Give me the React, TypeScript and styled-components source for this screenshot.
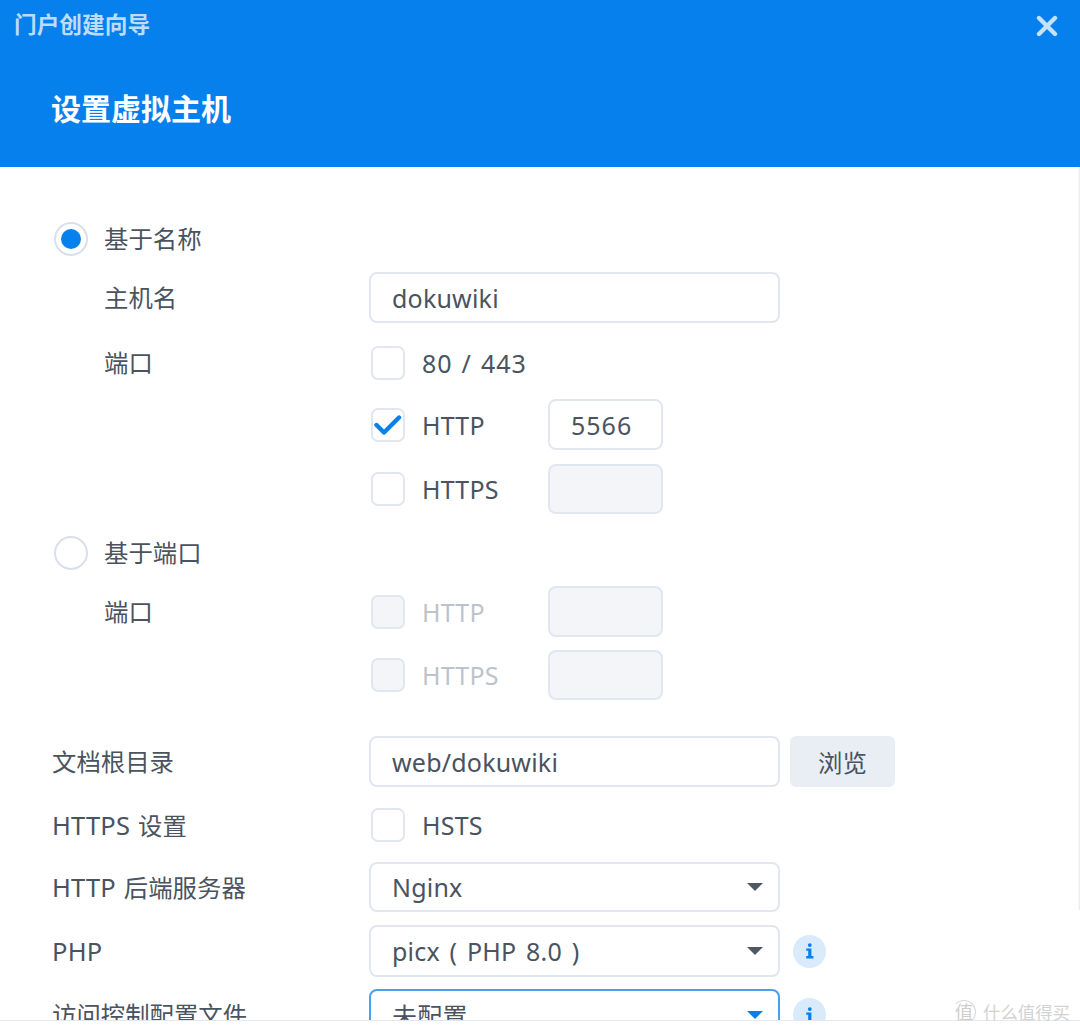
import styled, { createGlobalStyle } from "styled-components"

const FONT = `"Noto Sans", "Noto Sans CJK SC", sans-serif`

const GlobalStyle = createGlobalStyle`
  html, body {
    margin: 0;
    padding: 0;
    background: #fff;
  }
  body {
    font-family: ${FONT};
    color: #4a5360;
  }
`

const Page = styled.div`
  position: relative;
  width: 1080px;
  height: 1034px;
  overflow: hidden;
  background: #fff;
`

const Header = styled.header`
  height: 167px;
  background: #0580ed;
  display: flex;
  flex-direction: column;
  box-sizing: border-box;
`

const TitleBar = styled.div`
  height: 52px;
  padding: 0 22px 0 14px;
  display: flex;
  align-items: center;
  justify-content: space-between;
`

const WindowTitle = styled.div`
  font-size: 22.7px;
  font-weight: 700;
  line-height: 28px;
  padding-bottom: 2px;
  color: #bcdcfa;
`

const Heading = styled.h1`
  margin: 33px 0 0 51px;
  font-size: 30px;
  line-height: 48px;
  font-weight: 700;
  color: #fff;
`

const Body = styled.main`
  height: 854px;
  overflow: hidden;
  box-sizing: border-box;
  padding: 55px 0 0 52px;
  display: flex;
  flex-direction: column;
  border-bottom: 1px solid #e3e8ee;
`

const Row = styled.div<{ $h: number; $mt?: number }>`
  display: grid;
  grid-template-columns: 317px 1fr;
  align-items: center;
  flex: none;
  height: ${(p) => p.$h}px;
  margin-top: ${(p) => p.$mt ?? 0}px;
`

const RadioRow = styled(Row)`
  display: flex;
  gap: 16px;
  padding-left: 2px;
`

const Label = styled.div<{ $indent?: boolean }>`
  font-size: 24.4px;
  line-height: 32px;
  padding-left: ${(p) => (p.$indent ? 52 : 0)}px;
  white-space: nowrap;
`

// latin part of a label runs a bit wider than the chinese next to it
const Latin = styled.span`
  font-size: 25.5px;
  letter-spacing: 0.2px;
  word-spacing: 1px;
`

const RadioMark = styled.span<{ $on?: boolean }>`
  width: 34px;
  height: 34px;
  box-sizing: border-box;
  border-radius: 50%;
  border: 2px solid #d9e0ea;
  background: #fff;
  display: flex;
  align-items: center;
  justify-content: center;
  &::after {
    content: "";
    display: ${(p) => (p.$on ? "block" : "none")};
    width: 20px;
    height: 20px;
    border-radius: 50%;
    background: #0580ed;
  }
`

const Controls = styled.div`
  display: flex;
  align-items: center;
`

const Field = styled.div<{ $w?: number; $h?: number; $off?: boolean; $focus?: boolean; $num?: boolean }>`
  width: ${(p) => p.$w ?? 411}px;
  height: ${(p) => p.$h ?? 51}px;
  box-sizing: border-box;
  flex: none;
  display: flex;
  align-items: center;
  justify-content: space-between;
  padding: 0 21px;
  border: 2px solid ${(p) => (p.$focus ? "#4a9ff0" : "#e0e7f1")};
  border-radius: 8px;
  background: ${(p) => (p.$off ? "#f3f5f9" : "#fff")};
  font-size: 25px;
  letter-spacing: ${(p) => (p.$num ? 1 : 0.2)}px;
  word-spacing: 3px;
  white-space: nowrap;
`

const Caret = styled.span<{ $focus?: boolean }>`
  width: 0;
  height: 0;
  margin-right: -6px;
  border-left: 8px solid transparent;
  border-right: 8px solid transparent;
  border-top: 8px solid ${(p) => (p.$focus ? "#0580ed" : "#4f5863")};
`

const Browse = styled.div`
  width: 105px;
  height: 51px;
  margin-left: 10px;
  border-radius: 6px;
  background: #e9eef4;
  display: flex;
  align-items: center;
  justify-content: center;
  font-size: 24.4px;
`

const CheckWrap = styled.div`
  display: flex;
  align-items: center;
  margin-left: 2px;
`

const Box = styled.span<{ $off?: boolean }>`
  width: 34px;
  height: 34px;
  box-sizing: border-box;
  flex: none;
  border: 2px solid #e0e7f1;
  border-radius: 7px;
  background: ${(p) => (p.$off ? "#f3f5f9" : "#fff")};
  display: flex;
  align-items: center;
  justify-content: center;
`

const CheckLabel = styled.span<{ $off?: boolean; $w?: number; $num?: boolean }>`
  margin-left: 17px;
  width: ${(p) => (p.$w ? `${p.$w}px` : "auto")};
  font-size: 25px;
  letter-spacing: ${(p) => (p.$num ? 1 : 0.2)}px;
  word-spacing: ${(p) => (p.$num ? 1.5 : 0)}px;
  color: ${(p) => (p.$off ? "#bcc3cc" : "#4a5360")};
  white-space: nowrap;
`

const InfoBadge = styled.span`
  width: 33px;
  height: 33px;
  margin-left: 13px;
  border-radius: 50%;
  background: #d9eafb;
  display: flex;
  align-items: center;
  justify-content: center;
  flex: none;
`

const ScrollEdge = styled.div`
  position: absolute;
  right: 0;
  top: 167px;
  width: 2px;
  height: 743px;
  background: linear-gradient(to right, transparent, #e6e6e6);
`

const Watermark = styled.div`
  position: absolute;
  left: 952px;
  top: 1000px;
  display: flex;
  align-items: center;
  gap: 7px;
  color: #d2d2d2;
  font-size: 17.4px;
  line-height: 24px;
  white-space: nowrap;
`

const Stamp = styled.span`
  width: 24px;
  height: 24px;
  box-sizing: border-box;
  border: 1px solid #d6d6d6;
  border-left-color: transparent;
  border-bottom-color: transparent;
  border-radius: 50%;
  display: flex;
  align-items: center;
  justify-content: center;
  font-size: 18px;
  color: #cdcdcd;
`

const CloseIcon = () => (
  <svg width="22" height="22" viewBox="0 0 22 22">
    <path d="M3 3 L19 19 M19 3 L3 19" stroke="#c6e2fb" strokeWidth="4.4" strokeLinecap="round" />
  </svg>
)

const CheckIcon = () => (
  <svg width="28" height="22" viewBox="0 0 28 22">
    <path d="M2.5 11 L10 18.5 L25 3.5" fill="none" stroke="#0580ed" strokeWidth="4.4" strokeLinecap="round" strokeLinejoin="round" />
  </svg>
)

const InfoIcon = () => (
  <svg width="9.6" height="16" viewBox="0 0 12 20">
    <circle cx="6" cy="2.6" r="2.4" fill="#0580ed" />
    <path d="M1.5 7 H8 V16.4 H10.5 V19.5 H1.5 V16.4 H4 V9.6 H1.5 Z" fill="#0580ed" />
  </svg>
)

type CheckProps = { label: string; checked?: boolean; off?: boolean; w?: number; num?: boolean }

const Check = ({ label, checked, off, w, num }: CheckProps) => (
  <CheckWrap>
    <Box $off={off}>{checked && <CheckIcon />}</Box>
    <CheckLabel $off={off} $w={w} $num={num}>{label}</CheckLabel>
  </CheckWrap>
)

const App = () => (
  <Page>
    <GlobalStyle />
    <Header>
      <TitleBar>
        <WindowTitle>门户创建向导</WindowTitle>
        <CloseIcon />
      </TitleBar>
      <Heading>设置虚拟主机</Heading>
    </Header>
    <Body>
      <RadioRow $h={34}>
        <RadioMark $on />
        <Label>基于名称</Label>
      </RadioRow>
      <Row $h={51} $mt={16}>
        <Label $indent>主机名</Label>
        <Field>dokuwiki</Field>
      </Row>
      <Row $h={34} $mt={23}>
        <Label $indent>端口</Label>
        <Check label="80 / 443" num />
      </Row>
      <Row $h={51} $mt={19}>
        <span />
        <Controls>
          <Check label="HTTP" checked w={126} />
          <Field $w={115} $num>5566</Field>
        </Controls>
      </Row>
      <Row $h={50} $mt={14}>
        <span />
        <Controls>
          <Check label="HTTPS" w={126} />
          <Field $w={115} $h={50} $off />
        </Controls>
      </Row>
      <RadioRow $h={34} $mt={22}>
        <RadioMark />
        <Label>基于端口</Label>
      </RadioRow>
      <Row $h={51} $mt={16}>
        <Label $indent>端口</Label>
        <Controls>
          <Check label="HTTP" off w={126} />
          <Field $w={115} $off />
        </Controls>
      </Row>
      <Row $h={50} $mt={13}>
        <span />
        <Controls>
          <Check label="HTTPS" off w={126} />
          <Field $w={115} $h={50} $off />
        </Controls>
      </Row>
      <Row $h={51} $mt={36}>
        <Label>文档根目录</Label>
        <Controls>
          <Field>web/dokuwiki</Field>
          <Browse>浏览</Browse>
        </Controls>
      </Row>
      <Row $h={34} $mt={21}>
        <Label><Latin>HTTPS </Latin>设置</Label>
        <Check label="HSTS" />
      </Row>
      <Row $h={50} $mt={20}>
        <Label><Latin>HTTP </Latin>后端服务器</Label>
        <Field $h={50}>Nginx<Caret /></Field>
      </Row>
      <Row $h={52} $mt={13}>
        <Label><Latin>PHP</Latin></Label>
        <Controls>
          <Field $h={52}>picx ( PHP 8.0 )<Caret /></Field>
          <InfoBadge><InfoIcon /></InfoBadge>
        </Controls>
      </Row>
      <Row $h={51} $mt={12}>
        <Label>访问控制配置文件</Label>
        <Controls>
          <Field $focus>未配置<Caret $focus /></Field>
          <InfoBadge><InfoIcon /></InfoBadge>
        </Controls>
      </Row>
    </Body>
    <ScrollEdge />
    <Watermark>
      <Stamp>值</Stamp>
      什么值得买
    </Watermark>
  </Page>
)

export default App
